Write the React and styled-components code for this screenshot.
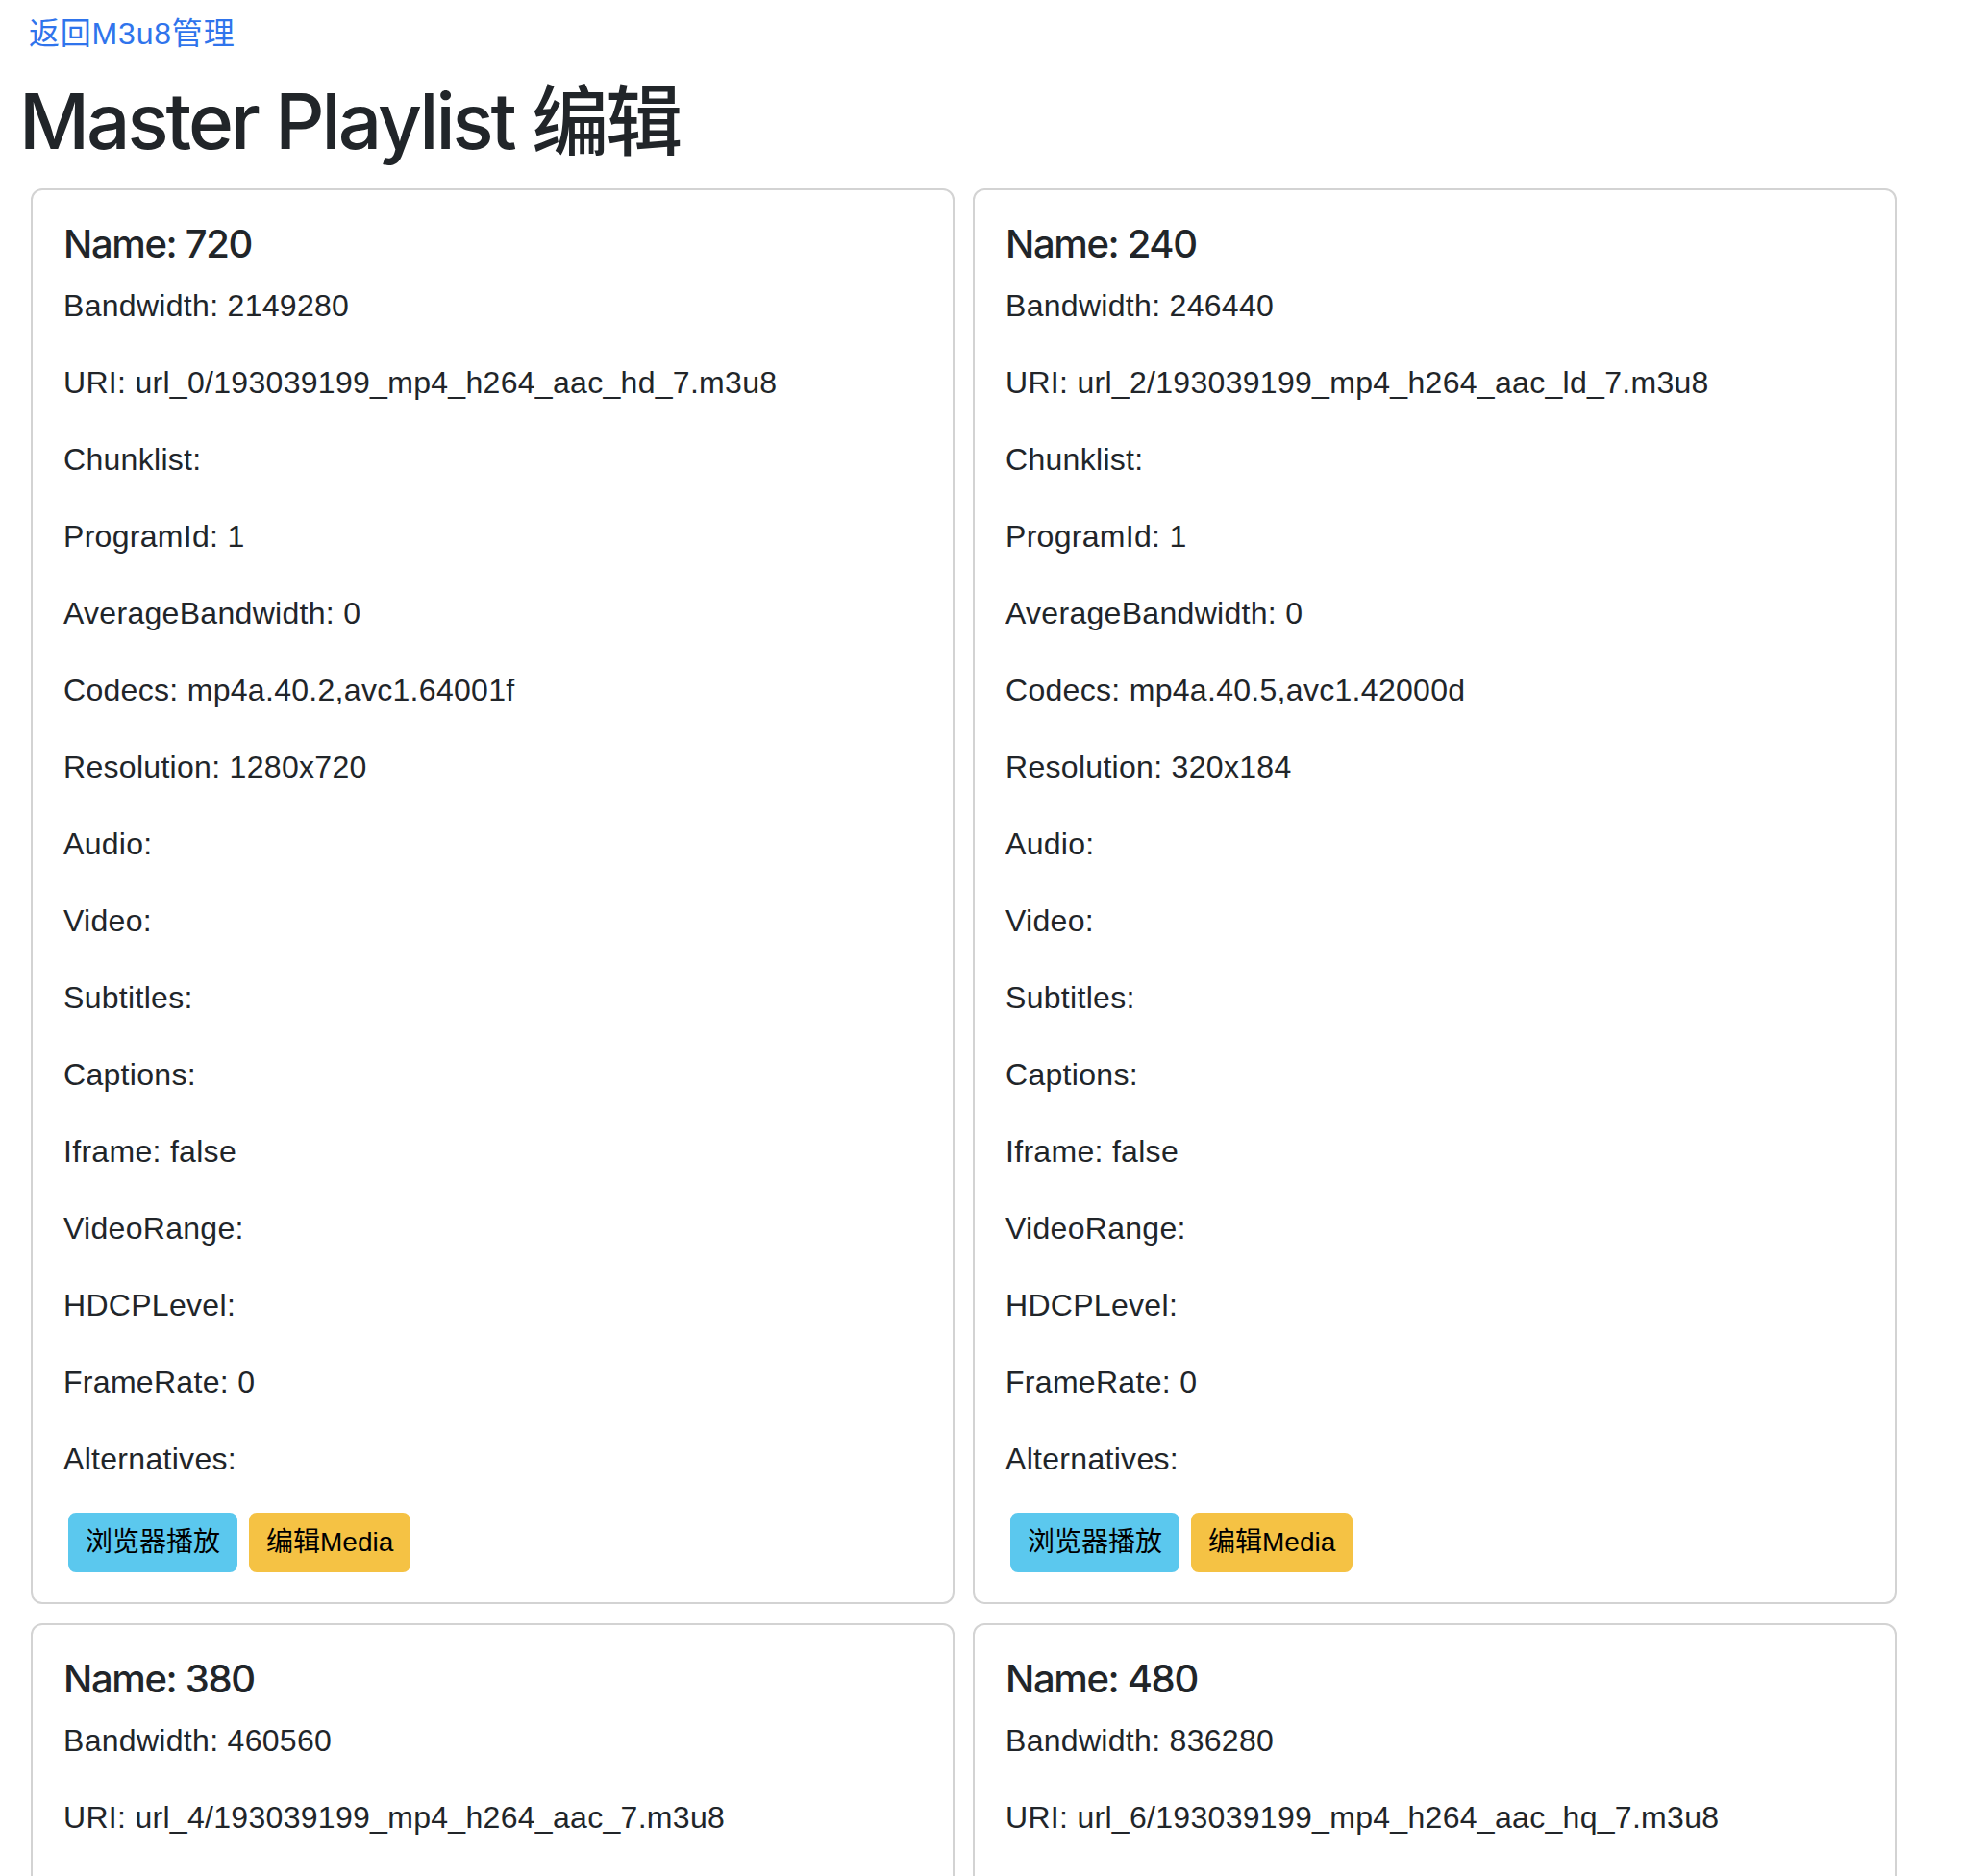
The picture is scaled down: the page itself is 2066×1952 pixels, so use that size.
import React from 'react';
import styled, { createGlobalStyle } from 'styled-components';

// page is a 2x retina shot of a bootstrap page, so every size is doubled
const GlobalStyle = createGlobalStyle`
  html, body {
    margin: 0;
    padding: 0;
    background: #fff;
  }
  body {
    font-family: "Liberation Sans", "Noto Sans CJK SC", sans-serif;
    font-size: 32px;
    line-height: 48px;
    color: #212529;
    letter-spacing: 0.3px;
  }
`;

const playlists = [
  {
    name: '720',
    bandwidth: '2149280',
    uri: 'url_0/193039199_mp4_h264_aac_hd_7.m3u8',
    codecs: 'mp4a.40.2,avc1.64001f',
    resolution: '1280x720',
  },
  {
    name: '240',
    bandwidth: '246440',
    uri: 'url_2/193039199_mp4_h264_aac_ld_7.m3u8',
    codecs: 'mp4a.40.5,avc1.42000d',
    resolution: '320x184',
  },
  {
    name: '380',
    bandwidth: '460560',
    uri: 'url_4/193039199_mp4_h264_aac_7.m3u8',
    codecs: 'mp4a.40.2,avc1.4d401e',
    resolution: '640x368',
  },
  {
    name: '480',
    bandwidth: '836280',
    uri: 'url_6/193039199_mp4_h264_aac_hq_7.m3u8',
    codecs: 'mp4a.40.2,avc1.4d401f',
    resolution: '854x480',
  },
];

const Page = styled.div`
  padding: 11px 0 40px;
`;

const BackLink = styled.a`
  display: inline-block;
  margin-left: 30px;
  color: #2f74ec;
  text-decoration: none;
  letter-spacing: 0.8px;
`;

const Title = styled.h1`
  margin: 19px 0 22px 20px;
  font-family: Inter, "Noto Sans CJK SC", sans-serif;
  font-size: 80px;
  line-height: 96px;
  font-weight: 500;
  letter-spacing: -3px;
`;

const CardGrid = styled.div`
  display: grid;
  grid-template-columns: 961px 961px;
  column-gap: 19px;
  row-gap: 20px;
  padding-left: 32px;
`;

const Card = styled.div`
  border: 2px solid #d3d3d3;
  border-radius: 12px;
  padding: 32px 32px 31px;
  background: #fff;
`;

const CardTitle = styled.h5`
  margin: 0 0 16px;
  font-family: Inter, "Noto Sans CJK SC", sans-serif;
  font-size: 40px;
  line-height: 48px;
  font-weight: 500;
  letter-spacing: -1.35px;
`;

const Field = styled.p`
  margin: 0 0 32px;
`;

const Actions = styled.div`
  display: flex;
  gap: 12px;
  padding-left: 5px;
`;

const Button = styled.button`
  font-family: "Liberation Sans", "Noto Sans CJK SC", sans-serif;
  font-size: 28px;
  line-height: 42px;
  padding: 8px 16px;
  border: 2px solid ${(p) => p.$bg};
  border-radius: 8px;
  background: ${(p) => p.$bg};
  color: #000;
  cursor: pointer;
`;

const PlaylistCard = ({ item }) => {
  const fields = [
    ['Bandwidth', item.bandwidth],
    ['URI', item.uri],
    ['Chunklist', ''],
    ['ProgramId', '1'],
    ['AverageBandwidth', '0'],
    ['Codecs', item.codecs],
    ['Resolution', item.resolution],
    ['Audio', ''],
    ['Video', ''],
    ['Subtitles', ''],
    ['Captions', ''],
    ['Iframe', 'false'],
    ['VideoRange', ''],
    ['HDCPLevel', ''],
    ['FrameRate', '0'],
    ['Alternatives', ''],
  ];

  return (
    <Card>
      <CardTitle>Name: {item.name}</CardTitle>
      {fields.map(([label, value]) => (
        <Field key={label}>
          {label}: {value}
        </Field>
      ))}
      <Actions>
        <Button $bg='#5bc8ee'>浏览器播放</Button>
        <Button $bg='#f5c244'>编辑Media</Button>
      </Actions>
    </Card>
  );
};

const App = () => {
  return (
    <Page>
      <GlobalStyle />
      <BackLink href='#'>返回M3u8管理</BackLink>
      <Title>Master Playlist 编辑</Title>
      <CardGrid>
        {playlists.map((item) => (
          <PlaylistCard key={item.name} item={item} />
        ))}
      </CardGrid>
    </Page>
  );
};

export default App;
